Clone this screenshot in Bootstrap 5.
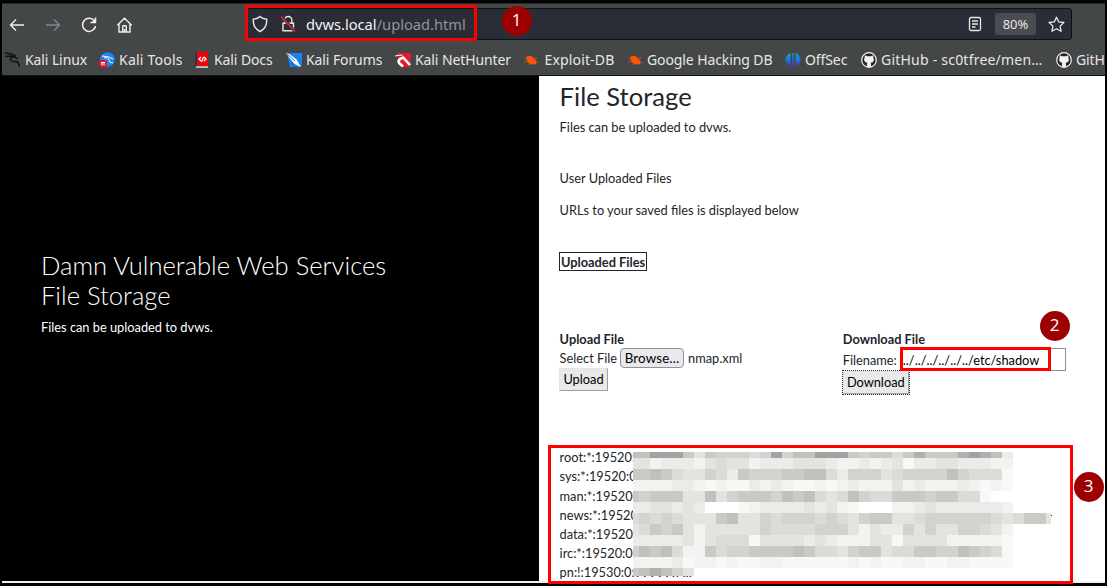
<!DOCTYPE html>
<html lang="en">
<head>
<meta charset="utf-8">
<title>File Storage</title>
<link href="https://cdn.jsdelivr.net/npm/bootstrap@5.3.0/dist/css/bootstrap.min.css" rel="stylesheet">
<style>
  html, body { height: 586px; overflow: hidden; }
  body { background: #000; font-family: "Lato", sans-serif; font-size: 12.8px; line-height: 19.2px; color: #212529; }
  svg { display: block; flex: none; }
  .frame { width: 1107px; height: 586px; padding: 3px 2px 2px; }
  .chrome { height: 73px; background: #444748; border-top: 1px solid #26292b; border-bottom: 1px solid #111; color: #e8e6e3; font-family: "Noto Sans", sans-serif; }
  .toolrow { height: 40px; padding: 4px 33px 0 5px; }
  .navicons { width: 238px; gap: 16px; padding-bottom: 3px; }
  .urlbar { height: 32px; background: #2a2d36; border: 1px solid #0f1117; border-radius: 3px; padding: 0 6px 0 5px; }
  .lock { margin-left: 9px; }
  .address { font-size: 14.67px; margin-left: 8px; padding-top: 1px; color: #f4f3f1; white-space: nowrap; }
  .address span { color: #929396; }
  .zoomlevel { width: 41px; height: 22px; line-height: 23px; margin: 0 12px; border-radius: 3px; background: #494c50; font-size: 13px; }
  .bookmarks { display: grid; grid-template-columns: 94px 95px 92px 109px 128px 104px 158px 76px 195px 50px; height: 31px; padding-left: 3px; font-size: 14px; letter-spacing: -.1px; overflow: hidden; }
  .bookmarks div { display: flex; align-items: center; gap: 4px; white-space: nowrap; }
  .bookmarks .wide { letter-spacing: .22px; }
  .bookmarks .exploit { padding-left: 1.5px; letter-spacing: .15px; }
  .page { height: 505px; }
  .hero { width: 537px; background: #000; color: #fff; padding: 174px 0 0 39px; }
  .hero h2 { font-weight: 300; font-size: 25.6px; line-height: 30px; margin: 0 0 8px; }
  .content { width: 566px; height: 505px; background: #fff; padding: 5px 0 0 20.6px; }
  .content h2 { font-size: 25.6px; line-height: 30.7px; font-weight: 400; margin: 0 0 6px; }
  .tbl { border: 1px solid #212529; width: 88px; height: 19px; line-height: 18px; margin: 32px 0 0 -.6px; padding-left: 1px; white-space: nowrap; }
  .forms { margin-top: 59px; height: 66px; }
  .upload { width: 283.2px; }
  .browse { font: 13.33px/17px "Lato", sans-serif; letter-spacing: .15px; color: #000; border: 1px solid #8f8f9d; border-radius: 4px; background: #e9e9ed; width: 64px; height: 20px; padding: 0; margin: -1px 4px 0 3px; }
  .flat { font: 12.8px/19px "Lato", sans-serif; color: #000; background: #e9e9e9; border: 1px solid #e3e3e3; border-right-color: #a3a09b; border-bottom-color: #a3a09b; padding: 0; display: block; }
  .up { width: 49px; height: 23px; margin-left: -.6px; }
  .down { width: 66px; height: 23px; outline: 1px dotted #222; }
  .fname { width: 166px; height: 23px; border: 1px solid #8f8f9d; font: 12.8px "Lato", sans-serif; color: #000; padding: 0 2px; margin: -1px 0 0 3px; }
  .dump { margin-top: 52px; height: 134px; overflow: hidden; }
  .footline { height: 2px; background: #eef0f2; }
  .mark-box { position: absolute; border: 3px solid #f00; }
  .step { position: absolute; width: 30px; height: 30px; border-radius: 50%; background: #9c0000; color: #fff; text-align: center; font: 17px/28px "Open Sans", sans-serif; }
  #mosaic { position: absolute; left: 633px; top: 452px; }
</style>
</head>
<body>
<div class="frame position-relative">
  <header class="chrome">
    <div class="toolrow d-flex">
      <div class="navicons d-flex align-items-center">
        <svg width="20" height="20" viewBox="0 0 20 20" fill="none" stroke="#f0efec" stroke-width="1.4"><path d="M17 10H3.5M9 4.5L3.5 10L9 15.5"/></svg>
        <svg width="20" height="20" viewBox="0 0 20 20" fill="none" stroke="#85878a" stroke-width="1.4"><path d="M3 10H16.5M11 4.5L16.5 10L11 15.5"/></svg>
        <svg width="20" height="20" viewBox="0 0 20 20" fill="none" stroke="#f0efec" stroke-width="1.5"><path d="M15.7 6.3A6.6 6.6 0 1 0 16.6 11M11.5 7.5H16.5V2.5"/><path d="M12.5 7.5h4V3.5z" fill="#f0efec" stroke="none"/></svg>
        <svg width="20" height="20" viewBox="0 0 20 20" fill="none" stroke="#f0efec" stroke-width="1.4"><path d="M2.3 10.2L9.500 3.2L16.7 10.2M4 9V17H15V9M7.7 17V11.5Q7.7 10.8 8.5 10.8H10.500Q11.3 10.8 11.3 11.5V17M9.500 14v3"/></svg>
      </div>
      <div class="urlbar flex-grow-1 d-flex align-items-center">
        <svg width="18" height="18" viewBox="0 0 18 18" fill="none" stroke="#e8e6e3" stroke-width="1.4"><path d="M9 1.4C7.5 3 4.5 4 2.3 4.2C2 9 4 14 9 16.5C14 14 16 9 15.7 4.2C13.500 4 10.5 3 9 1.400Z"/></svg>
        <svg class="lock" width="20" height="18" viewBox="0 0 20 18" fill="none" stroke="#e8e6e3" stroke-width="1.4"><path d="M6.500 8V5.200a3.700 3.700 0 0 1 7.400 0V8M5 8.200H15.500V15.800H5Z"/><path d="M3 1L17 16.500" stroke="#2a2d36" stroke-width="3"/><path d="M3 1.500L17 16.500" stroke="#e0224e" stroke-width="1.600"/></svg>
        <div class="address">dvws.local<span>/upload.html</span></div>
        <div class="ms-auto d-flex align-items-center">
          <svg width="16" height="16" viewBox="0 0 16 16" fill="none" stroke="#e8e6e3" stroke-width="1.300"><rect x="2.500" y="1.500" width="11" height="13" rx="1.500"/><path d="M5 5h6M5 8h6M5 11h3.500"/></svg>
          <div class="zoomlevel text-center">80%</div>
          <svg width="17" height="17" viewBox="0 0 17 17" fill="none" stroke="#e8e6e3" stroke-width="1.300" stroke-linejoin="round"><path d="M8.500 1.200L10.700 5.900L15.900 6.500L12.100 10.100L13.100 15.300L8.500 12.700L3.900 15.300L4.900 10.100L1.100 6.500L6.300 5.900Z"/></svg>
        </div>
      </div>
    </div>
    <nav class="bookmarks">
      <div><svg width="16" height="16" viewBox="0 0 16 16" fill="none" stroke="#111" stroke-width="1.400"><path d="M0 1L6 2L11 4M0 4.500L6 4L8 5Q4 6 6 8.500Q7.500 10 11 9.500Q14 10 14.500 15M8 4L13 7"/></svg>Kali Linux</div>
      <div class="wide"><svg width="16" height="16" viewBox="0 0 16 16"><circle cx="8.500" cy="7.500" r="7.300" fill="#1f83f7"/><path d="M3 4L10 5L14 7M5 6Q10 5 10 8T14 11" stroke="#fff" fill="none" stroke-width="1"/><circle cx="4" cy="11.800" r="4" fill="#e8151f"/><path d="M2 10.500h4M3 10.500v3M5 10.500v3" stroke="#fff"/></svg>Kali Tools</div>
      <div><svg width="16" height="16" viewBox="0 0 16 16"><path d="M1.500 0h2v15h-2z" fill="#17335e"/><path d="M3 0h11v14H3z" fill="#f00505"/><path d="M2 14.300h12v1.500H2z" fill="#ddd"/><path d="M7 5L5 7L7 9M10 5L12 7L10 9M9.500 5L7.500 10" stroke="#fff" fill="none" stroke-width="1.200"/></svg>Kali Docs</div>
      <div><svg width="16" height="16" viewBox="0 0 16 16"><path d="M1 1h15.500L15.500 15H4z" fill="#1683f8"/><path d="M0 1L4 2.500L10.500 7.500L15 15L8.500 12L3.500 6Z" fill="#fff"/><path d="M1 2l8 7M6 11l3 4" stroke="#444748" stroke-width=".8"/></svg>Kali Forums</div>
      <div><svg width="16" height="16" viewBox="0 0 16 16"><path d="M2 1h14l-1 14H5z" fill="#e31b2a"/><path d="M15 13L10 7.500A3.500 3.500 0 0 0 4 11L8 14.500" stroke="#fff" fill="none" stroke-width="2.600"/><path d="M0 4l6-1l4 3" stroke="#fff" fill="none"/></svg>Kali NetHunter</div>
      <div><svg width="16" height="16" viewBox="0 0 16 16"><path d="M3 6Q6 2.500 10 5.500L13.500 8.500L13 12Q8 13.500 5 10.500Z" fill="#fb5607"/><path d="M1 5.500l3 1.500M3 3.500l3 2M8 3v2M11 6l3-.5M13 10l2.500 1M5 9l-4 1M7 11l-1 2" stroke="#fb5607" stroke-width=".7"/></svg><span class="exploit">Exploit-DB</span></div>
      <div><svg width="16" height="16" viewBox="0 0 16 16"><path d="M3 6Q6 2.500 10 5.500L13.500 8.500L13 12Q8 13.500 5 10.500Z" fill="#fb5607"/><path d="M1 5.500l3 1.500M3 3.500l3 2M8 3v2M11 6l3-.5M13 10l2.500 1M5 9l-4 1M7 11l-1 2" stroke="#fb5607" stroke-width=".7"/></svg><span>Google Hacking DB</span></div>
      <div><svg width="16" height="16" viewBox="0 0 16 16"><defs><linearGradient id="os" x1="0" y1="0" x2="0" y2="1"><stop offset="0" stop-color="#0aa6c8"/><stop offset=".5" stop-color="#1c73d8"/><stop offset="1" stop-color="#6a1fc0"/></linearGradient></defs><path d="M5.500 .8V14.500Q1 12 .5 7.500Q1 3 5.500 .8ZM7.300 1h1.400v14.500H7.300ZM10.500 .8V14.500Q15 12 15.500 7.500Q15 3 10.500 .8Z" fill="url(#os)"/></svg>OffSec</div>
      <div class="wide"><svg width="16" height="16" viewBox="0 0 16 16"><circle cx="8" cy="8" r="7.300" fill="#222528" stroke="#f4f3f1" stroke-width="1.200"/><path d="M3.800 3.300L6 4.300H10L12.200 3.300Q12.300 4.500 12.400 5.500Q14 10 9.800 10.800L10.300 15H5.700L6.200 10.800Q2 10 3.600 5.500Z" fill="#f4f3f1"/></svg>GitHub - sc0tfree/men…</div>
      <div><svg width="16" height="16" viewBox="0 0 16 16"><circle cx="8" cy="8" r="7.300" fill="#222528" stroke="#f4f3f1" stroke-width="1.200"/><path d="M3.800 3.300L6 4.300H10L12.200 3.300Q12.300 4.500 12.400 5.500Q14 10 9.800 10.800L10.300 15H5.700L6.200 10.800Q2 10 3.600 5.500Z" fill="#f4f3f1"/></svg>GitH</div>
    </nav>
  </header>

  <main class="page d-flex">
    <section class="hero">
      <h2>Damn Vulnerable Web Services<br>File Storage</h2>
      <p class="m-0">Files can be uploaded to dvws.</p>
    </section>
    <section class="content">
      <h2>File Storage</h2>
      <p class="m-0">Files can be uploaded to dvws.</p>
      <p style="margin:32px 0 12.800px">User Uploaded Files</p>
      <p class="m-0">URLs to your saved files is displayed below</p>
      <div class="tbl fw-bold">Uploaded Files</div>
      <div class="forms d-flex">
        <div class="upload">
          <b class="d-block">Upload File</b>
          <div class="d-flex align-items-center" style="height:19px">Select File <button class="browse">Browse…</button>nmap.xml</div>
          <button class="flat up">Upload</button>
        </div>
        <div>
          <b class="d-block">Download File</b>
          <div class="d-flex align-items-center" style="height:22px">Filename: <input class="fname" value="../../../../../../etc/shadow"></div>
          <button class="flat down">Download</button>
        </div>
      </div>
      <div class="dump">root:*:19520:<br>sys:*:19520:0<br>man:*:19520<br>news:*:19520<br>data:*:19520<br>irc:*:19520:0<br>pn:!:19530:0:99999:7:::</div>
    </section>
  </main>
  <div class="footline"></div>

  <svg id="mosaic" width="420" height="124" shape-rendering="crispEdges"></svg>
  <div class="mark-box" style="left:245px;top:5px;width:232px;height:36px"></div>
  <div class="mark-box" style="left:900px;top:347px;width:151px;height:24px"></div>
  <div class="mark-box" style="left:548px;top:445px;width:525px;height:139px"></div>
  <div class="step" style="left:501.500px;top:6px">1</div>
  <div class="step" style="left:1039.500px;top:310.500px">2</div>
  <div class="step" style="left:1073.500px;top:471.500px">3</div>
</div>
<script src="https://cdn.jsdelivr.net/npm/bootstrap@5.3.0/dist/js/bootstrap.bundle.min.js"></script>
<script>
  // Redaction mosaic: one digit per 11px cell, 0 = white, a = darkest grey.
  const tones = { 0:'#ffffff', 1:'#f8f8f7', 2:'#f2f2f1', 3:'#ebebea', 4:'#e3e3e0', 5:'#dbdbd8', 6:'#d3d2ce', 7:'#cacac5', 8:'#c1c1bb', 9:'#b1b0ac', a:'#a4a19f' };
  const rows = [
    '88aaa74766656a688aaa76775797779a983',
    '44233324544233344432232341334433322',
    '77875446537666778853666456666865551',
    '22223321211323211212322242322232121',
    '76777448467776878545865577767755100',
    '33443430001233334342100022343333332',
    '565654447844656665654677445666666545774',
    '45767424444465555666424336464466542',
    '33333424555144443432224414444222221',
    '68785227566777787554677455776687651',
    '22223122121122111111212112211221111',
    '789864'
  ];
  let cells = '';
  rows.forEach((r, j) => [...r].forEach((c, i) => {
    const x = i ? 6 + (i - 1) * 11 : 0, y = j ? 6 + (j - 1) * 11 : 0;
    const w = i === 0 ? 6 : i === 38 ? 5 : 11, h = j === 0 ? 6 : j === 11 ? 8 : 11;
    cells += `<rect x="${x}" y="${y}" width="${w}" height="${h}" fill="${tones[c]}"/>`;
  }));
  cells += '<rect x="418" y="63" width="1" height="1" fill="#222"/>';
  document.getElementById('mosaic').innerHTML = cells;
</script>
</body>
</html>
